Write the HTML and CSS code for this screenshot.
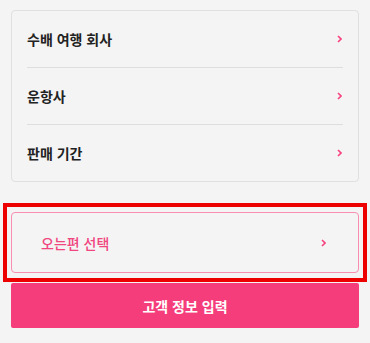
FILE: index.html
```html
<!DOCTYPE html>
<html lang="ko">
<head>
<meta charset="utf-8">
<link rel="stylesheet" href="styles.css">
</head>
<body>
<div class="page">
  <div class="card">
    <div class="row"><span class="label">수배 여행 회사</span><svg class="chev" width="5" height="8" viewBox="0 0 5 8"><polyline points="1,1 4,4 1,7" fill="none" stroke="#f7437f" stroke-width="1.6"/></svg></div>
    <div class="row"><span class="label">운항사</span><svg class="chev" width="5" height="8" viewBox="0 0 5 8"><polyline points="1,1 4,4 1,7" fill="none" stroke="#f7437f" stroke-width="1.6"/></svg></div>
    <div class="row"><span class="label">판매 기간</span><svg class="chev" width="5" height="8" viewBox="0 0 5 8"><polyline points="1,1 4,4 1,7" fill="none" stroke="#f7437f" stroke-width="1.6"/></svg></div>
  </div>
  <div class="select-wrap">
    <div class="select-btn"><span class="select-label">오는편 선택</span><svg class="chev" width="5" height="8" viewBox="0 0 5 8"><polyline points="1,1 4,4 1,7" fill="none" stroke="#f7437f" stroke-width="1.6"/></svg></div>
    <div class="highlight"></div>
  </div>
  <div class="primary-btn">고객 정보 입력</div>
</div>
</body>
</html>
```
FILE: styles.css
```css
html, body {
  margin: 0;
  padding: 0;
  background: #f4f4f4;
}
body {
  font-family: "Noto Sans CJK KR", "Noto Sans", sans-serif;
  width: 370px;
  height: 343px;
  overflow: hidden;
}
.page {
  padding: 10px 11px;
}
.card {
  border: 1px solid #e0e0e0;
  border-radius: 4px;
  padding: 0 15px;
  display: flex;
  flex-direction: column;
}
.row {
  height: 56px;
  display: flex;
  align-items: center;
  justify-content: space-between;
  border-bottom: 1px solid #dedede;
}
.row:last-child {
  border-bottom: none;
}
.label {
  font-size: 14px;
  font-weight: 600;
  color: #222;
}
.chev {
  display: block;
  margin-right: 1px;
}
.select-wrap {
  position: relative;
  margin-top: 30px;
}
.select-btn {
  height: 59px;
  border: 1px solid #f78db1;
  border-radius: 4px;
  display: flex;
  align-items: center;
  justify-content: space-between;
  padding: 0 31px 0 29px;
}
.select-label {
  font-size: 14px;
  font-weight: 500;
  color: #f0457f;
}
.highlight {
  position: absolute;
  left: -8px;
  top: -9px;
  width: 356px;
  height: 71px;
  border: 4px solid #ec0000;
}
.primary-btn {
  margin-top: 10px;
  height: 45px;
  background: #f53d7b;
  border-radius: 2px;
  color: #fff;
  font-size: 14px;
  font-weight: 700;
  display: flex;
  align-items: center;
  justify-content: center;
}
```
